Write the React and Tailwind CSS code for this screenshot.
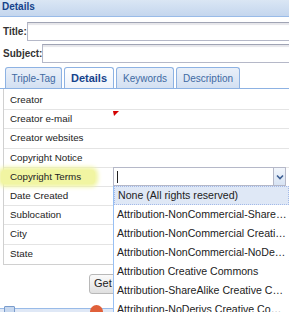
const rows = [
  'Creator',
  'Creator e-mail',
  'Creator websites',
  'Copyright Notice',
  'Copyright Terms',
  'Date Created',
  'Sublocation',
  'City',
  'State',
]

const options = [
  'None (All rights reserved)',
  'Attribution-NonCommercial-Share…',
  'Attribution-NonCommercial Creati…',
  'Attribution-NonCommercial-NoDe…',
  'Attribution Creative Commons',
  'Attribution-ShareAlike Creative C…',
  'Attribution-NoDerivs Creative Co…',
]

const tabs = [
  { name: 'Triple-Tag', w: 'w-[57px]' },
  { name: 'Details', w: 'w-[50px]', active: true },
  { name: 'Keywords', w: 'w-[58px]' },
  { name: 'Description', w: 'w-[64px]' },
]

function TextInput({ className }) {
  return (
    <div
      className={`h-[19px] border border-[#b5b8c8] border-t-[#a0a4b4] bg-white shadow-[inset_0_2px_1px_#e6e6ea] ${className}`}
    />
  )
}

export default function App() {
  return (
    <div className="relative h-[312px] w-[289px] overflow-hidden bg-white font-['Liberation_Sans',Arial,sans-serif] text-[11px] text-[#222]">
      <div className="h-[17px] border-b border-[#99bbe8] bg-gradient-to-b from-[#dae6f4] to-[#c4d6ee] pl-[2px] text-[10px] leading-[13px] font-bold text-[#15428b]">
        Details
      </div>

      <div className="mt-[5px] flex items-center">
        <span className="w-[29px] pl-[3px] text-[10px] font-bold text-[#333]">Title:</span>
        <TextInput className="w-[270px] shrink-0" />
      </div>
      <div className="mt-[3px] flex items-center">
        <span className="w-[44px] pl-[3px] text-[10px] font-bold text-[#333]">Subject:</span>
        <TextInput className="w-[260px] shrink-0" />
      </div>

      <div className="mt-[5px] flex h-[21px] items-end gap-[2px] border-b border-[#8db2e3] pl-[5px]">
        {tabs.map((t) => (
          <div
            key={t.name}
            className={`${t.w} flex h-[21px] items-center justify-center rounded-t-[3px] border border-b-0 border-[#8db2e3] ${
              t.active
                ? 'bg-gradient-to-b from-white to-[#eef3fb] text-[11px] font-bold text-[#15428b]'
                : 'bg-gradient-to-b from-[#eaf0f9] to-[#d3e0f2] text-[10px] text-[#416aa3]'
            }`}
          >
            {t.name}
          </div>
        ))}
      </div>

      <div className="ml-[3px] border-b border-l border-[#d0d0d0] pt-[2px] text-[9.8px]">
        {rows.map((r, i) => (
          <div key={r} className="relative flex h-[19.2px] items-center border-b border-[#e4e4e4] last:border-b-0">
            {r === 'Copyright Terms' ? (
              <span className="-ml-[3px] rounded-[4px] bg-[#f1f5a2] pl-[9px] pr-[14px] leading-[14px] shadow-[0_0_4px_3px_#f1f5a2]">
                {r}
              </span>
            ) : (
              <span className="ml-[6px] leading-[14px]">{r}</span>
            )}
            {i === 1 && (
              <svg className="absolute left-[109px] top-[1px]" width="6" height="5" viewBox="0 0 6 5">
                <polygon points="0,0 6,0 1,5" fill="#d40000" />
              </svg>
            )}
          </div>
        ))}
      </div>

      <div className="mt-[9px] ml-[89px] flex h-[20px] w-[40px] items-center rounded-[3px] border border-[#b8b8b8] bg-gradient-to-b from-[#fafafa] to-[#e0e0e0] pl-[4px] text-[11px]">
        Get
      </div>

      <div className="absolute bottom-0 left-0 h-[4px] w-full border-t border-[#99bbe8] bg-[#dfe8f6]" />
      <span className="absolute left-[4px] top-[306px] h-[8px] w-[11px] rounded-[1px] border border-[#7a9ccc] bg-[#c7d8ef]" />
      <span className="absolute left-[90px] top-[305px] h-[13px] w-[13px] rounded-full bg-[#e0603a]" />

      {/* combo field + open list */}
      <div className="absolute left-[113px] top-[167px] w-[176px]">
        <div className="flex h-[19px] w-[173px] border border-[#b5b8c8] bg-white">
          <div className="flex flex-1 items-center pl-[3px]">
            <span className="h-[12px] w-px bg-[#222]" />
          </div>
          <div className="flex w-[12px] items-center justify-center border-l border-[#b5b8c8] bg-gradient-to-b from-[#f2f6fc] to-[#d7e3f3]">
            <svg width="8" height="6" viewBox="0 0 8 6">
              <path d="M1 1.5 L4 4.5 L7 1.5" fill="none" stroke="#3d5f93" strokeWidth="1.6" />
            </svg>
          </div>
        </div>
        <div className="overflow-hidden border-l border-[#98c0f4] bg-white text-[10.6px]">
          {options.map((o, i) => (
            <div
              key={o}
              className={`flex h-[19px] items-center whitespace-nowrap pl-[3px] ${
                i === 0 ? 'border border-dotted border-[#a3bae9] bg-[#dfe8f6]' : ''
              }`}
            >
              {o}
            </div>
          ))}
        </div>
      </div>
    </div>
  )
}
